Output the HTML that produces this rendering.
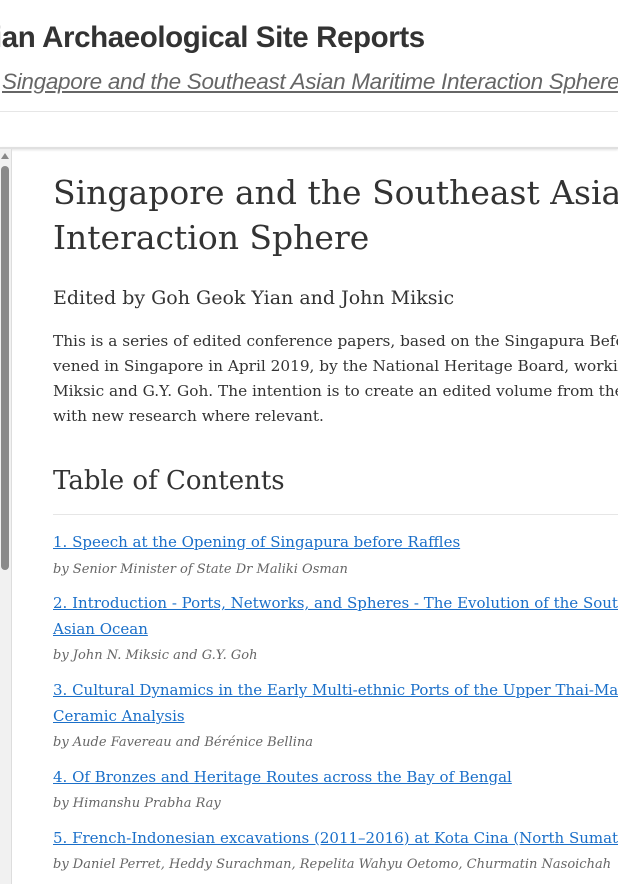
<!DOCTYPE html>
<html><head><meta charset="utf-8"><style>
html,body{margin:0;padding:0;width:618px;height:884px;overflow:hidden;background:#fff}
body{position:relative;font-family:"DejaVu Serif","Liberation Serif",serif;color:#333}
#wrap{position:absolute;left:0;top:0;width:618px;height:884px;overflow:hidden}
.nw{white-space:nowrap;position:absolute}
#t1{left:-6px;top:21px;font-family:"Liberation Sans",sans-serif;font-weight:bold;font-size:29.5px;color:#333;letter-spacing:-0.4px}
#t2{left:2px;top:69px;font-family:"Liberation Sans",sans-serif;font-style:italic;font-size:22.5px;color:#666;text-decoration:underline;letter-spacing:-0.3px}
#hr1{position:absolute;left:0;right:0;top:111px;height:1px;background:#e6e6e6}
#hr2{position:absolute;left:0;right:0;top:147px;height:2px;background:#e0e0e0;box-shadow:0 1px 2px #ddd}
#sb{position:absolute;left:0;top:149px;width:11px;bottom:0;background:#f1f1f1;border-right:1px solid #ddd}
#thumb{position:absolute;left:1px;top:17px;width:8px;height:404px;background:#8a8a8a;border-radius:4px}
#arr{position:absolute;left:1px;top:4px;width:0;height:0;border-left:4px solid transparent;border-right:4px solid transparent;border-bottom:6px solid #888}
h1{font-weight:normal;font-size:33px;line-height:45px;margin:0;position:absolute;left:53px;top:170px;white-space:nowrap;color:#333}
.ed{left:53px;top:287px;font-size:19px;color:#333}
.p{left:53px;font-size:15.3px;color:#333}
.toc{left:53px;top:466px;font-size:26px;color:#333}
#hr3{position:absolute;left:53px;right:0;top:514px;height:1px;background:#e6e6e6}
.a{left:53px;font-size:15px;color:#1a6fc9;text-decoration:underline}
.b{left:53px;font-size:13px;font-style:italic;color:#666}
</style></head><body><div id="wrap">
<div class="nw" id="t1">ian Archaeological Site Reports</div>
<div class="nw" id="t2">Singapore and the Southeast Asian Maritime Interaction Sphere</div>
<div id="hr1"></div>
<div id="hr2"></div>
<div id="sb"><div id="arr"></div><div id="thumb"></div></div>
<h1>Singapore and the Southeast Asian<br>Interaction Sphere</h1>
<div class="nw ed">Edited by Goh Geok Yian and John Miksic</div>
<div class="nw p" style="top:332px">This is a series of edited conference papers, based on the Singapura Before</div>
<div class="nw p" style="top:357px">vened in Singapore in April 2019, by the National Heritage Board, working</div>
<div class="nw p" style="top:382px">Miksic and G.Y. Goh. The intention is to create an edited volume from the</div>
<div class="nw p" style="top:407px">with new research where relevant.</div>
<div class="nw toc">Table of Contents</div>
<div id="hr3"></div>
<div class="nw a" style="top:533px">1. Speech at the Opening of Singapura before Raffles</div>
<div class="nw b" style="top:562px">by Senior Minister of State Dr Maliki Osman</div>
<div class="nw a" style="top:594px">2. Introduction - Ports, Networks, and Spheres - The Evolution of the Southeast</div>
<div class="nw a" style="top:620px">Asian Ocean</div>
<div class="nw b" style="top:648px">by John N. Miksic and G.Y. Goh</div>
<div class="nw a" style="top:681px">3. Cultural Dynamics in the Early Multi-ethnic Ports of the Upper Thai-Malay</div>
<div class="nw a" style="top:707px">Ceramic Analysis</div>
<div class="nw b" style="top:735px">by Aude Favereau and Bérénice Bellina</div>
<div class="nw a" style="top:768px">4. Of Bronzes and Heritage Routes across the Bay of Bengal</div>
<div class="nw b" style="top:796px">by Himanshu Prabha Ray</div>
<div class="nw a" style="top:829px">5. French-Indonesian excavations (2011–2016) at Kota Cina (North Sumatra)</div>
<div class="nw b" style="top:857px">by Daniel Perret, Heddy Surachman, Repelita Wahyu Oetomo, Churmatin Nasoichah</div>
</div></body></html>
